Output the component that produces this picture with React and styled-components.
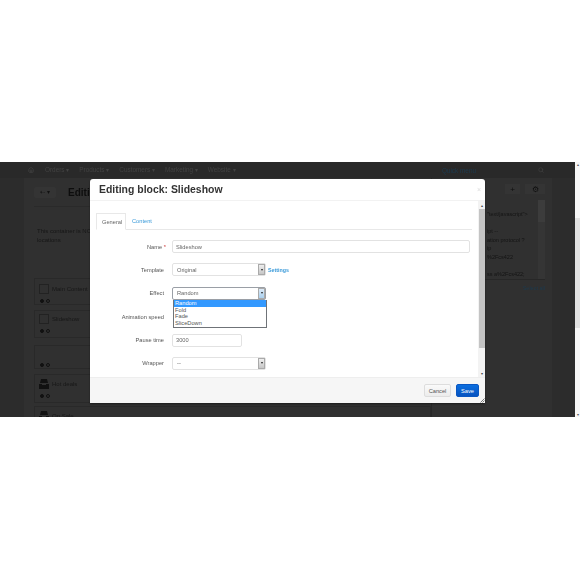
import React from 'react';
import styled, { createGlobalStyle } from 'styled-components';
import { Home, Search } from 'lucide-react';

const GlobalStyle = createGlobalStyle`
  html, body { margin: 0; padding: 0; background: #fff; }
  body { font-family: "Liberation Sans", Arial, sans-serif; overflow: hidden; }
`;

const Page = styled.div`
  width: 580px;
  height: 580px;
  padding-top: 162px;
  box-sizing: border-box;
  background: #fff;
`;

const Shot = styled.div`
  position: relative;
  height: 255px;
  display: flex;
  overflow: hidden;
  filter: blur(0.35px);
`;

const Backdrop = styled.div`
  flex: 1;
  min-width: 0;
  display: flex;
  flex-direction: column;
  background: #2c2c2c;
  filter: blur(0.45px);
`;

const WinScroll = styled.div`
  width: 5px;
  flex: none;
  display: flex;
  flex-direction: column;
  background: #f7f7f7;
  color: #555;
  font-size: 4px;
  line-height: 5px;
  text-align: center;
`;

const WinThumb = styled.div`
  height: 110px;
  margin-top: 51px;
  background: #e2e2e2;
`;

const WinArrow = styled.span`
  height: 5px;
  margin-top: ${(p) => p.$auto ? 'auto' : '0'};
`;

const Nav = styled.div`
  height: 16px;
  flex: none;
  display: flex;
  align-items: center;
  gap: 10px;
  padding: 0 31px 0 28px;
  background: #292929;
  font-size: 6.4px;
`;

const NavItem = styled.span`
  display: flex;
  color: ${(p) => p.$color || '#424242'};
  margin-left: ${(p) => p.$left || '0'};
`;

const Columns = styled.div`
  flex: 1;
  display: flex;
  margin: 0 23px 0 24px;
  min-height: 0;
  overflow: hidden;
  background: #303030;
`;

const MainCol = styled.div`
  width: 408px;
  flex: none;
  padding-left: 10px;
  box-sizing: border-box;
  border-right: 1px solid #272727;
`;

const Toolbar = styled.div`
  height: 28px;
  display: flex;
  align-items: center;
  gap: 12px;
  border-bottom: 1px solid #2a2a2a;
`;

const BackBtn = styled.div`
  width: 22px;
  height: 11px;
  border-radius: 2px;
  background: #343434;
  color: #111;
  font-size: 6px;
  text-align: center;
  line-height: 11px;
`;

const PageTitle = styled.div`
  font-size: 10px;
  font-weight: bold;
  color: #0d0d0d;
`;

const Notice = styled.div`
  margin-top: 20px;
  padding-left: 3px;
  height: 36px;
  color: #161616;
  font-size: 6px;
  line-height: 8.5px;
  width: 95px;
`;

const BlockRow = styled.div`
  height: ${(p) => p.$height || 27}px;
  box-sizing: border-box;
  margin-top: ${(p) => p.$gap || 0}px;
  padding: ${(p) => p.$top || 5}px 4px 0;
  border: 1px solid #292929;
  color: #171717;
  font-size: 6px;
`;

const BlockHead = styled.div`
  display: flex;
  align-items: center;
  gap: 3px;
  height: 10px;
`;

const BlockIcon = styled.span`
  width: 10px;
  height: 10px;
  box-sizing: border-box;
  border: 1px solid #222;
`;

const BlockDots = styled.div`
  display: flex;
  gap: 2px;
  margin: ${(p) => p.$gap || 5}px 0 0 1px;
`;

const BlockDot = styled.span`
  width: 4px;
  height: 4px;
  box-sizing: border-box;
  border-radius: 50%;
  border: 1px solid #111;
  background: ${(p) => p.$filled ? '#111' : 'transparent'};
`;

const SideCol = styled.div`
  flex: 1;
  min-width: 0;
  padding-right: 7px;
  display: flex;
  flex-direction: column;
  align-items: flex-end;
  color: #141414;
  font-size: 5.5px;
`;

const SideBar = styled.div`
  height: 22px;
  flex: none;
  display: flex;
  align-items: center;
  gap: 5px;
`;

const SideBtn = styled.div`
  width: ${(p) => p.$width}px;
  height: 10px;
  display: flex;
  align-items: center;
  justify-content: center;
  background: #343434;
  color: #0f0f0f;
  font-size: 8px;
`;

const CodeBox = styled.div`
  width: 60px;
  height: 80px;
  flex: none;
  display: flex;
  border-bottom: 1px solid #272727;
  box-sizing: border-box;
`;

const CodeText = styled.pre`
  flex: 1;
  min-width: 0;
  margin: 0;
  padding: 10px 0 0 2px;
  font: inherit;
  line-height: 8.5px;
  overflow: hidden;
`;

const CodeScroll = styled.div`
  width: 7px;
  flex: none;
  background: #353535;
`;

const CodeThumb = styled.div`
  height: 22px;
  background: #3c3c3c;
`;

const SelectAll = styled.div`
  margin-top: 5px;
  color: #1d3a4e;
`;

const Modal = styled.div`
  position: absolute;
  left: 90px;
  top: 17px;
  width: 395px;
  height: 224px;
  display: flex;
  flex-direction: column;
  background: #fff;
  border-radius: 3px 3px 0 0;
  box-shadow: 0 1px 2px rgba(0, 0, 0, 0.4);
  color: #666;
  font-size: 5.7px;
`;

const ModalHeader = styled.div`
  height: 22px;
  flex: none;
  display: flex;
  align-items: center;
  justify-content: space-between;
  padding: 0 4px 0 9px;
  box-sizing: border-box;
  border-bottom: 1px solid #f2f2f2;
`;

const ModalTitle = styled.h3`
  margin: 0;
  font-size: 10.45px;
  font-weight: bold;
  color: #333;
`;

const CloseMark = styled.span`
  color: #ddd;
  font-size: 7px;
`;

const ModalMiddle = styled.div`
  flex: 1;
  display: flex;
  min-height: 0;
`;

const ModalBody = styled.div`
  flex: 1;
  padding: 12px 6px 0 6px;
  overflow: hidden;
`;

const Tabs = styled.div`
  display: flex;
  align-items: flex-end;
  height: 16px;
  border-bottom: 1px solid #e8e8e8;
`;

const Tab = styled.div`
  height: 16px;
  box-sizing: border-box;
  padding: 0 5px;
  display: flex;
  align-items: center;
  color: ${(p) => p.$active ? '#666' : '#3a9ad9'};
  ${(p) => p.$active && `
    width: 30px;
    border: 1px solid #e8e8e8;
    border-bottom: 1px solid #fff;
    margin-bottom: -1px;
    height: 17px;
  `}
  ${(p) => !p.$active && 'margin-left: 1px;'}
`;

const Form = styled.div`
  margin-top: 10px;
  display: grid;
  grid-template-columns: 70px 1fr;
  column-gap: 6px;
  row-gap: 10.4px;
  padding-right: 2px;
  grid-auto-rows: 13px;
  align-items: center;
`;

const Label = styled.label`
  padding-right: 2px;
  text-align: right;
  color: #555;
`;

const Req = styled.span`
  margin-right: -2px;
  color: #c33;
`;

const FieldWrap = styled.div`
  position: relative;
  display: flex;
  align-items: center;
  gap: 2px;
`;

const TextInput = styled.div`
  width: ${(p) => p.$width || '100%'};
  height: 13px;
  box-sizing: border-box;
  display: flex;
  align-items: center;
  padding: 0 3px;
  border: 1px solid #e2e2e2;
  border-radius: 2px;
  color: #666;
`;

const SelectBox = styled.div`
  width: 94px;
  height: 13px;
  box-sizing: border-box;
  display: flex;
  align-items: center;
  justify-content: space-between;
  padding-left: 4px;
  border: 1px solid ${(p) => p.$open ? '#9a9fa6' : '#e2e2e2'};
  border-radius: 2px;
`;

const SelectArrow = styled.span`
  width: 7px;
  align-self: stretch;
  display: flex;
  align-items: center;
  justify-content: center;
  background: ${(p) => p.$open ? 'linear-gradient(#dceaf7, #a9d0ef)' : 'linear-gradient(#eee, #c6c6c6)'};
  border: 1px solid #aaa;
  box-sizing: border-box;
  &::after {
    content: '';
    border-left: 1.5px solid transparent;
    border-right: 1.5px solid transparent;
    border-top: 2px solid #222;
  }
`;

const TextLink = styled.a`
  color: #3a9ad9;
  font-size: 5.3px;
  font-weight: bold;
`;

const DropList = styled.div`
  position: absolute;
  left: 1px;
  top: 13px;
  width: 94px;
  box-sizing: border-box;
  background: #fff;
  border: 1px solid #6f7378;
  border-top: 0;
  z-index: 2;
`;

const DropItem = styled.div`
  height: 6.75px;
  line-height: 6.75px;
  padding-left: 1px;
  color: ${(p) => p.$active ? '#fff' : '#555'};
  background: ${(p) => p.$active ? '#3399ff' : 'transparent'};
`;

const ModalScroll = styled.div`
  width: 7px;
  flex: none;
  display: flex;
  flex-direction: column;
  padding-top: 2px;
  box-sizing: border-box;
  background: #f3f3f3;
  color: #444;
  font-size: 4px;
  line-height: 6px;
  text-align: center;
`;

const ScrollThumb = styled.div`
  width: 6px;
  height: 139px;
  margin-left: 1px;
  background: #c4c4c4;
`;

const ScrollEnd = styled.span`
  margin-top: ${(p) => p.$auto ? 'auto' : '0'};
  height: 6px;
`;

const ModalFooter = styled.div`
  height: 26px;
  flex: none;
  display: flex;
  align-items: center;
  justify-content: flex-end;
  gap: 5px;
  padding-right: 6px;
  box-sizing: border-box;
  background: #f6f6f6;
  border-top: 1px solid #eee;
`;

const Button = styled.button`
  height: 13px;
  width: ${(p) => p.$primary ? '23px' : '27px'};
  padding: 0;
  border: 1px solid ${(p) => p.$primary ? '#0a57c2' : '#ddd'};
  border-radius: 2px;
  font: inherit;
  color: ${(p) => p.$primary ? '#fff' : '#555'};
  background: ${(p) => p.$primary ? 'linear-gradient(#0b6fe0, #0753c0)' : 'linear-gradient(#fafafa, #ececec)'};
`;

const ResizeGrip = styled.svg`
  position: absolute;
  right: 0;
  bottom: 0;
  width: 5px;
  height: 5px;
`;

const effects = ['Random', 'Fold', 'Fade', 'SliceDown'];

const codeText = `"text/javascript">

ipt --
ation protocol ?
ip
%2Fcs422

ss a%2Fcs422;`;

function BlockBag() {
  return (
    <svg width="10" height="10" viewBox="0 0 10 10" fill="#111">
      <path d="M2 0h6l1 4H1z" />
      <path d="M0 5h3v1h4V5h3v5H0z" />
    </svg>
  );
}

function Dots() {
  return (
    <BlockDots>
      <BlockDot $filled />
      <BlockDot />
    </BlockDots>
  );
}

function Background() {
  return (
    <Backdrop>
      <Nav>
        <NavItem><Home size={6} strokeWidth={3} /></NavItem>
        <NavItem $left="1px">Orders ▾</NavItem>
        <NavItem>Products ▾</NavItem>
        <NavItem>Customers ▾</NavItem>
        <NavItem>Marketing ▾</NavItem>
        <NavItem>Website ▾</NavItem>
        <NavItem $left="auto" $color="#1d3a4e">Quick menu</NavItem>
        <NavItem $left="52px"><Search size={6} strokeWidth={2.5} /></NavItem>
      </Nav>
      <Columns>
        <MainCol>
          <Toolbar>
            <BackBtn>⇠ ▾</BackBtn>
            <PageTitle>Editi</PageTitle>
          </Toolbar>
          <Notice>This container is NOT displayed in locations</Notice>
          <BlockRow $gap={15}>
            <BlockHead><BlockIcon />Main Content</BlockHead>
            <Dots />
          </BlockRow>
          <BlockRow $gap={5} $height={28} $top={3}>
            <BlockHead><BlockIcon />Slideshow</BlockHead>
            <Dots />
          </BlockRow>
          <BlockRow $gap={7} $height={24} $top={2}>
            <BlockHead />
            <Dots />
          </BlockRow>
          <BlockRow $gap={5} $height={29} $top={4}>
            <BlockHead><BlockBag />Hot deals</BlockHead>
            <Dots />
          </BlockRow>
          <BlockRow $gap={3} $top={4}>
            <BlockHead><BlockBag />On Sale</BlockHead>
          </BlockRow>
        </MainCol>
        <SideCol>
          <SideBar>
            <SideBtn $width={15}>+</SideBtn>
            <SideBtn $width={20}>⚙</SideBtn>
          </SideBar>
          <CodeBox>
            <CodeText>{codeText}</CodeText>
            <CodeScroll><CodeThumb /></CodeScroll>
          </CodeBox>
          <SelectAll>Select all</SelectAll>
        </SideCol>
      </Columns>
    </Backdrop>
  );
}

function BlockModal() {
  return (
    <Modal>
      <ModalHeader>
        <ModalTitle>Editing block: Slideshow</ModalTitle>
        <CloseMark>×</CloseMark>
      </ModalHeader>
      <ModalMiddle>
        <ModalBody>
          <Tabs>
            <Tab $active>General</Tab>
            <Tab>Content</Tab>
          </Tabs>
          <Form>
            <Label>Name <Req>*</Req></Label>
            <FieldWrap><TextInput>Slideshow</TextInput></FieldWrap>

            <Label>Template</Label>
            <FieldWrap>
              <SelectBox>Original<SelectArrow /></SelectBox>
              <TextLink>Settings</TextLink>
            </FieldWrap>

            <Label>Effect</Label>
            <FieldWrap>
              <SelectBox $open>Random<SelectArrow $open /></SelectBox>
              <DropList>
                {effects.map((name, i) => (
                  <DropItem key={name} $active={i === 0}>{name}</DropItem>
                ))}
              </DropList>
            </FieldWrap>

            <Label>Animation speed</Label>
            <FieldWrap />

            <Label>Pause time</Label>
            <FieldWrap><TextInput $width="70px">3000</TextInput></FieldWrap>

            <Label>Wrapper</Label>
            <FieldWrap>
              <SelectBox>--<SelectArrow /></SelectBox>
            </FieldWrap>
          </Form>
        </ModalBody>
        <ModalScroll>
          <ScrollEnd>▴</ScrollEnd>
          <ScrollThumb />
          <ScrollEnd $auto>▾</ScrollEnd>
        </ModalScroll>
      </ModalMiddle>
      <ModalFooter>
        <Button>Cancel</Button>
        <Button $primary>Save</Button>
      </ModalFooter>
      <ResizeGrip viewBox="0 0 5 5" stroke="#555" strokeWidth="0.8">
        <path d="M0.5 4.5L4.5 0.5M2.5 4.5L4.5 2.5" />
      </ResizeGrip>
    </Modal>
  );
}

export default function App() {
  return (
    <Page>
      <GlobalStyle />
      <Shot>
        <Background />
        <WinScroll>
          <WinArrow>▴</WinArrow>
          <WinThumb />
          <WinArrow $auto>▾</WinArrow>
        </WinScroll>
        <BlockModal />
      </Shot>
    </Page>
  );
}
